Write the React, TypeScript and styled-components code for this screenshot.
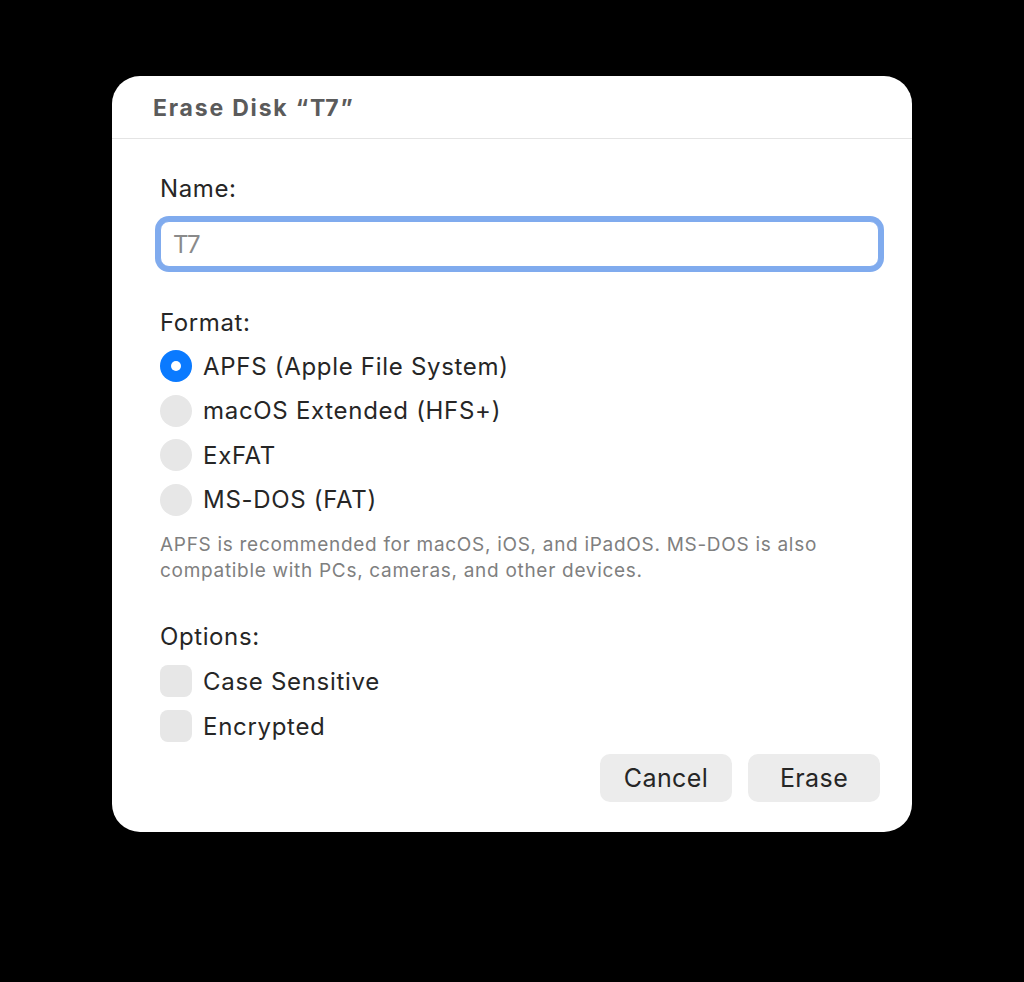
import React, { useState } from 'react';
import styled, { createGlobalStyle } from 'styled-components';

const GlobalStyle = createGlobalStyle`
  html, body {
    margin: 0;
    padding: 0;
    background: #000;
  }
  body {
    min-height: 982px;
    font-family: Inter, "Noto Sans", "Liberation Sans", sans-serif;
    -webkit-font-smoothing: antialiased;
  }
`;

const Page = styled.div`
  display: flex;
  padding: 76px 0 0 112px;
  min-height: 982px;
  box-sizing: border-box;
`;

const Dialog = styled.div`
  width: 800px;
  height: 756px;
  background: #fff;
  border-radius: 28px;
  display: flex;
  flex-direction: column;
  overflow: hidden;
`;

const Header = styled.div`
  height: 63px;
  display: flex;
  align-items: center;
  padding: 2px 0 0 41px;
  box-sizing: border-box;
  border-bottom: 1px solid #e4e4e4;
`;

const Title = styled.h1`
  margin: 0;
  font-size: 23px;
  font-weight: 700;
  color: #5b5b5b;
  letter-spacing: 1.8px;
`;

const Body = styled.div`
  padding: 36px 32px 30px 48px;
  display: flex;
  flex-direction: column;
  flex: 1;
`;

const SectionLabel = styled.div<{ $gap?: number }>`
  font-size: 24px;
  line-height: 28px;
  letter-spacing: 0.6px;
  color: #262626;
  margin-top: ${(p) => p.$gap ?? 0}px;
`;

const Field = styled.input`
  margin-top: 18px;
  width: 719px;
  height: 46px;
  box-sizing: border-box;
  border: 1px solid #80abee;
  border-radius: 9px;
  box-shadow: 0 0 0 5px #80abee;
  padding: 0 12px;
  font-family: inherit;
  font-size: 24px;
  letter-spacing: 0.5px;
  color: #262626;
  outline: none;
  &::placeholder {
    color: #8a8a8a;
  }
`;

const ChoiceList = styled.div<{ $gap: number }>`
  display: flex;
  flex-direction: column;
  margin-top: ${(p) => p.$gap}px;
`;

const Choice = styled.label<{ $h: number }>`
  display: flex;
  align-items: center;
  gap: 11px;
  height: ${(p) => p.$h}px;
  font-size: 24px;
  letter-spacing: 0.7px;
  color: #262626;
  cursor: default;
`;

const RadioDot = styled.span<{ $on: boolean }>`
  width: 32px;
  height: 32px;
  border-radius: 50%;
  background: ${(p) => (p.$on ? '#0a7aff' : '#e7e7e7')};
  display: flex;
  align-items: center;
  justify-content: center;
  flex-shrink: 0;
  &::after {
    content: '';
    width: 10px;
    height: 10px;
    border-radius: 50%;
    background: #fff;
    display: ${(p) => (p.$on ? 'block' : 'none')};
  }
`;

const CheckBox = styled.span`
  width: 32px;
  height: 32px;
  border-radius: 8px;
  background: #e7e7e7;
  flex-shrink: 0;
`;

const Help = styled.p`
  margin: 10px 0 0;
  font-size: 19px;
  line-height: 26px;
  letter-spacing: 0.7px;
  color: #7f7f7f;
`;

const Footer = styled.div`
  margin-top: 5px;
  display: flex;
  justify-content: flex-end;
  gap: 16px;
`;

const Button = styled.button`
  width: 132px;
  height: 48px;
  border: none;
  border-radius: 10px;
  background: #ececec;
  font-family: inherit;
  font-size: 25px;
  letter-spacing: 0.4px;
  color: #262626;
`;

const formats = [
  'APFS (Apple File System)',
  'macOS Extended (HFS+)',
  'ExFAT',
  'MS-DOS (FAT)',
];

const options = ['Case Sensitive', 'Encrypted'];

export default function App() {
  const [format, setFormat] = useState(0);

  return (
    <>
      <GlobalStyle />
      <Page>
        <Dialog>
          <Header>
            <Title>Erase Disk “T7”</Title>
          </Header>
          <Body>
            <SectionLabel>Name:</SectionLabel>
            <Field placeholder="T7" />

            <SectionLabel $gap={42}>Format:</SectionLabel>
            <ChoiceList $gap={7}>
              {formats.map((f, i) => (
                <Choice key={f} $h={44.5} onClick={() => setFormat(i)}>
                  <RadioDot $on={format === i} />
                  {f}
                </Choice>
              ))}
            </ChoiceList>
            <Help>
              APFS is recommended for macOS, iOS, and iPadOS. MS-DOS is also
              <br />
              compatible with PCs, cameras, and other devices.
            </Help>

            <SectionLabel $gap={39}>Options:</SectionLabel>
            <ChoiceList $gap={7.5}>
              {options.map((o) => (
                <Choice key={o} $h={45}>
                  <CheckBox />
                  {o}
                </Choice>
              ))}
            </ChoiceList>

            <Footer>
              <Button>Cancel</Button>
              <Button>Erase</Button>
            </Footer>
          </Body>
        </Dialog>
      </Page>
    </>
  );
}
